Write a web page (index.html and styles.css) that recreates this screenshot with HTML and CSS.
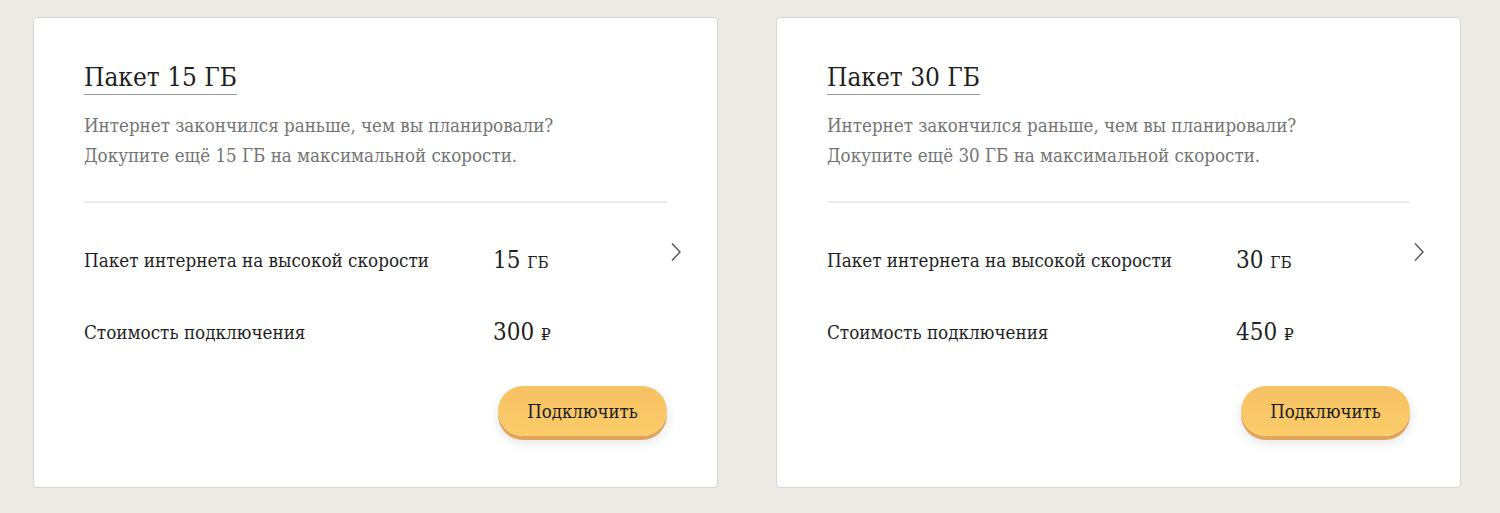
FILE: index.html
```html
<!DOCTYPE html>
<html lang="ru">
<head>
<meta charset="utf-8">
<title>Пакеты интернета</title>
<link rel="stylesheet" href="styles.css">
</head>
<body>
<main class="offers">
  <section class="card">
    <h2 class="card-title"><span>Пакет 15 ГБ</span></h2>
    <p class="card-desc">Интернет закончился раньше, чем вы планировали?<br>Докупите ещё 15 ГБ на максимальной скорости.</p>
    <hr class="card-divider">
    <div class="param">
      <span class="param-name">Пакет интернета на высокой скорости</span>
      <span class="param-value">15 <small>ГБ</small></span>
      <svg class="chevron" width="12" height="20" viewBox="0 0 12 20"><path d="M2 1.5 L10 10 L2 18.5" fill="none" stroke="#555" stroke-width="1.4"/></svg>
    </div>
    <div class="param">
      <span class="param-name">Стоимость подключения</span>
      <span class="param-value">300 <small>₽</small></span>
    </div>
    <div class="card-actions">
      <button class="btn">Подключить</button>
    </div>
  </section>
  <section class="card">
    <h2 class="card-title"><span>Пакет 30 ГБ</span></h2>
    <p class="card-desc">Интернет закончился раньше, чем вы планировали?<br>Докупите ещё 30 ГБ на максимальной скорости.</p>
    <hr class="card-divider">
    <div class="param">
      <span class="param-name">Пакет интернета на высокой скорости</span>
      <span class="param-value">30 <small>ГБ</small></span>
      <svg class="chevron" width="12" height="20" viewBox="0 0 12 20"><path d="M2 1.5 L10 10 L2 18.5" fill="none" stroke="#555" stroke-width="1.4"/></svg>
    </div>
    <div class="param">
      <span class="param-name">Стоимость подключения</span>
      <span class="param-value">450 <small>₽</small></span>
    </div>
    <div class="card-actions">
      <button class="btn">Подключить</button>
    </div>
  </section>
</main>
</body>
</html>
```

FILE: styles.css
```css
html, body {
  margin: 0;
  padding: 0;
  background: #edeae6;
}

body {
  font-family: "DejaVu Serif", "Liberation Serif", serif;
  font-stretch: condensed;
  color: #1f1f1f;
}

.offers {
  display: flex;
  gap: 58px;
  padding: 17px 0 0 33px;
}

.card {
  box-sizing: border-box;
  width: 685px;
  height: 471px;
  background: #fff;
  border: 1px solid #d8d6d3;
  border-radius: 4px;
  padding: 42px 50px 0 50px;
  position: relative;
}

.card-title {
  margin: 0;
  font-weight: normal;
  font-size: 26px;
  line-height: 34px;
}

.card-title span {
  display: inline-block;
  border-bottom: 1px solid #9a9a9a;
}

.card-desc {
  margin: 16px 0 0;
  font-size: 18.6px;
  line-height: 30px;
  color: #747474;
}

.card-divider {
  margin: 30px 0 0;
  border: 0;
  border-top: 2px solid #ececec;
}

.param {
  display: flex;
  align-items: center;
  height: 72px;
  position: relative;
}

.param:first-of-type {
  margin-top: 21px;
}

.param-name {
  width: 409px;
  font-size: 18.7px;
}

.param-value {
  font-size: 24px;
}

.param-value small {
  font-size: 17px;
}

.chevron {
  position: absolute;
  right: -15px;
  top: 18px;
}

.card-actions {
  display: flex;
  justify-content: flex-end;
  margin-top: 18px;
}

.btn {
  font-family: inherit;
  font-stretch: condensed;
  font-size: 18.5px;
  color: #1a1a1a;
  width: 169px;
  height: 50px;
  border: 0;
  border-radius: 25px;
  background: linear-gradient(#f6c163, #fbcc6a);
  box-shadow: 0 4px 0 #e3a45a, 0 6px 12px rgba(0, 0, 0, 0.12);
  cursor: pointer;
}
```
